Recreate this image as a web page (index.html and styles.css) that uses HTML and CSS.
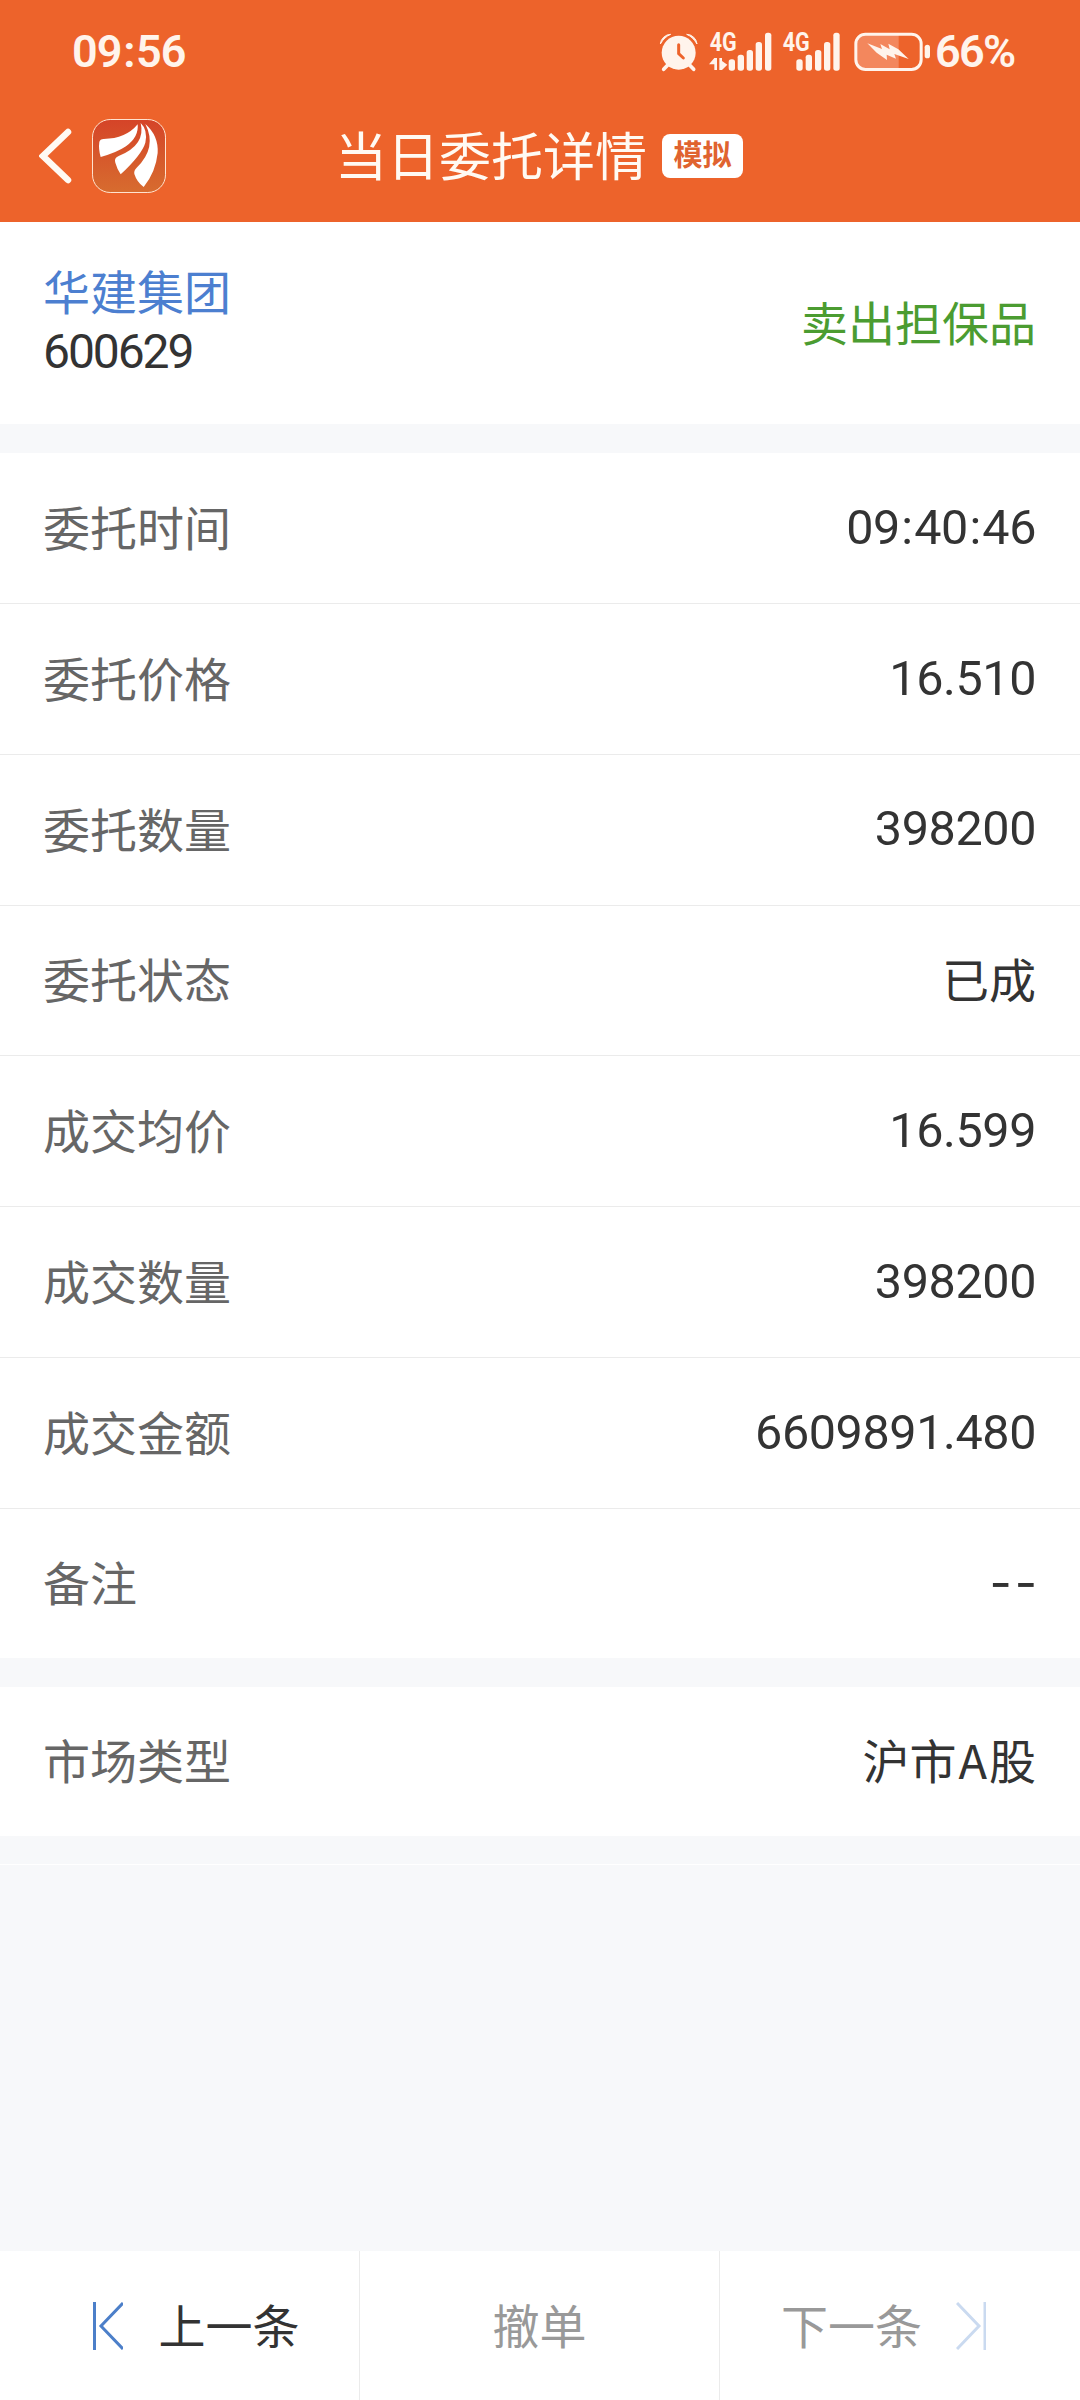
FILE: index.html
```
<!DOCTYPE html>
<html lang="zh-CN">

<head>
  <meta charset="UTF-8">
  <title>当日委托详情</title>
  <link rel="stylesheet" href="styles.css">
</head>

<body>
  <header class="header">
    <div class="status-bar">
      <span class="time">09<span class="colon">:</span>56</span>
      <svg class="status-icons" viewBox="48 30 840 180">
        <!-- alarm -->
        <circle cx="116" cy="125" r="51" />
        <path d="M61 99a32 32 0 0 1 31-29q-19 8-31 29zM171 99a32 32 0 0 0-31-29q19 8 31 29z" stroke="#fff4ec" stroke-width="3" />
        <path d="M84 161l-13 14M148 161l13 14" stroke="#fff4ec" stroke-width="11" stroke-linecap="round" />
        <path d="M116 101v27l14 13" fill="none" stroke="#ed632b" stroke-width="9" stroke-linecap="round" />
        <!-- sim 1 -->
        <text x="209" y="120" textLength="81" lengthAdjust="spacingAndGlyphs">4G</text>
        <path d="M207 160l16-19h8v36h-8v-17zM238 141h8v9l16 11-16 16h-8z" />
        <rect x="266" y="145" width="19" height="34" rx="8" />
        <rect x="293" y="131" width="19" height="48" rx="8" />
        <rect x="320" y="117" width="19" height="62" rx="8" />
        <rect x="347" y="93" width="19" height="86" rx="8" />
        <rect x="375" y="65" width="19" height="114" rx="8" />
        <!-- sim 2 -->
        <text x="428" y="120" textLength="81" lengthAdjust="spacingAndGlyphs">4G</text>
        <rect x="469" y="145" width="19" height="34" rx="8" />
        <rect x="497" y="131" width="19" height="48" rx="8" />
        <rect x="525" y="117" width="19" height="62" rx="8" />
        <rect x="552" y="93" width="19" height="86" rx="8" />
        <rect x="580" y="65" width="19" height="114" rx="8" />
        <!-- battery -->
        <path d="M776 70v104H680q-31 0-31-31v-42q0-31 31-31z" fill="#f3875d" />
        <rect x="647.500" y="69.500" width="196" height="106" rx="29" fill="none" stroke="#fff4ec" stroke-width="9" />
        <rect x="854" y="101" width="16" height="41" rx="8" />
        <path d="M682 97l44 17-5-15 28 16-4-17 30 17 31 29-43-15 5 14-28-12 1 16-31-22z" />
      </svg>
      <span class="battery">66%</span>
    </div>
    <div class="nav">
      <svg class="back" viewBox="0 0 34 56">
        <path d="M29 4L4 28l25 24" />
      </svg>
      <svg class="logo" viewBox="216 57 222 222">
        <defs>
          <linearGradient id="logo-bg" x1="0" y1="0" x2="0" y2="1">
            <stop offset="0" stop-color="#d54428" />
            <stop offset="1" stop-color="#d76c2f" />
          </linearGradient>
        </defs>
        <rect x="217.500" y="58.500" width="219" height="219" rx="53" fill="url(#logo-bg)" stroke="#ffe3cf" stroke-width="3" />
        <path d="M353 73Q357 111 318 139Q290 158 242 171Q235 147 238 126Q240 117 251 117Q318 116 353 73z" />
        <path d="M362 69Q384 90 376 128Q366 163 302 223Q292 209 286 188Q281 174 296 168Q378 135 362 69z" />
        <path d="M376 72Q416 107 413 159Q407 217 371 261Q351 247 343 222Q341 211 350 203Q412 143 376 72z" />
      </svg>
      <div class="title">
        <h1>当日委托详情</h1>
        <span class="badge">模拟</span>
      </div>
    </div>
  </header>

  <main>
    <section class="stock">
      <div>
        <a class="stock-name">华建集团</a>
        <div class="stock-code">600629</div>
      </div>
      <span class="side">卖出担保品</span>
    </section>

    <section class="list">
      <div class="row"><span class="label">委托时间</span><span class="num">09<span class="colon">:</span>40<span class="colon">:</span>46</span></div>
      <div class="row"><span class="label">委托价格</span><span class="num">16.510</span></div>
      <div class="row"><span class="label">委托数量</span><span class="num">398200</span></div>
      <div class="row"><span class="label">委托状态</span><span class="value">已成</span></div>
      <div class="row"><span class="label">成交均价</span><span class="num">16.599</span></div>
      <div class="row"><span class="label">成交数量</span><span class="num">398200</span></div>
      <div class="row"><span class="label">成交金额</span><span class="num">6609891.480</span></div>
      <div class="row last"><span class="label">备注</span><span class="num dash">--</span></div>
    </section>

    <section class="list">
      <div class="row last"><span class="label">市场类型</span><span class="value">沪市<span class="latin">A</span>股</span></div>
    </section>
    <div class="end-line"></div>
  </main>

  <footer class="footer">
    <div class="action prev">
      <svg class="step" viewBox="0 0 30 48"><path d="M1.500 0v48M30 1L8 24l22 23" /></svg>
      <span>上一条</span>
    </div>
    <div class="action disabled"><span>撤单</span></div>
    <div class="action next disabled">
      <span>下一条</span>
      <svg class="step" viewBox="0 0 30 48"><path d="M29 0v48M1 1l22 23L1 47" /></svg>
    </div>
  </footer>
</body>

</html>
```
FILE: styles.css
```
* {
  box-sizing: border-box;
}

body {
  margin: 0;
  height: 2400px;
  display: flex;
  flex-direction: column;
  background: #f7f8fa;
  color: #333;
  font-family: "Noto Sans CJK SC", sans-serif;
  font-size: 47px;
  line-height: 1;
}

.header {
  height: 222px;
  background: #ed632b;
  color: #fffaf3;
}

.status-bar {
  height: 100px;
  display: flex;
  align-items: center;
  padding: 2px 61px 0 72px;
  color: #fff4ec;
  font-family: Roboto, sans-serif;
  font-size: 45px;
  font-weight: 600;
}

.time {
  letter-spacing: -0.9px;
}

.status-icons {
  width: 280px;
  height: 60px;
  margin-left: auto;
  margin-right: -1px;
  fill: #fff4ec;
}

.status-icons text {
  font-size: 76px;
  font-weight: 700;
}

.battery {
  width: 84px;
  letter-spacing: -1.7px;
  white-space: nowrap;
}

.colon {
  margin: 0 1.5px;
}

.nav {
  height: 112px;
  display: flex;
  align-items: center;
  padding-left: 39px;
}

.back {
  width: 34px;
  height: 56px;
  fill: none;
  stroke: #fffaf3;
  stroke-width: 6.5;
  stroke-linecap: round;
}

.logo {
  width: 74px;
  height: 74px;
  margin-left: 19px;
  fill: #fff;
}

.title {
  display: flex;
  align-items: center;
  margin-left: 169px;
}

h1 {
  margin: 0;
  padding-bottom: 4px;
  font-size: 52px;
  font-weight: 400;
}

.badge {
  width: 81px;
  height: 44px;
  margin-left: 15px;
  border-radius: 8px;
  background: #fff;
  color: #e0632f;
  font-size: 29px;
  font-weight: 700;
  line-height: 39px;
  text-align: center;
}

.stock {
  height: 202px;
  display: flex;
  justify-content: space-between;
  align-items: center;
  padding: 0 44px 0 43px;
  background: #fff;
}

.stock-name {
  display: block;
  margin-top: -5px;
  color: #4c7fd0;
}

.stock-code {
  margin-top: 15px;
  font-family: Roboto, sans-serif;
  font-size: 48px;
  letter-spacing: -2.1px;
}

.side {
  padding-bottom: 6px;
  color: #4b9c31;
}

.list {
  margin-top: 29px;
  background: #fff;
}

.row {
  height: 150.857px;
  display: flex;
  justify-content: space-between;
  align-items: center;
  padding: 0 44px 0 43px;
  border-bottom: 1px solid #ebebeb;
}

.row.last {
  height: 149px;
  border-bottom: none;
}

.label,
.value {
  padding-bottom: 5px;
}

.label {
  color: #666;
}

.latin {
  margin: 0 2px;
}

.num {
  font-family: Roboto, sans-serif;
  font-size: 48.5px;
  letter-spacing: -0.4px;
}

.dash {
  font-family: Inter, sans-serif;
  letter-spacing: 3px;
  margin-right: -4px;
}

.end-line {
  height: 1px;
  margin-top: 28px;
  background: #fff;
}

.footer {
  height: 149px;
  margin-top: auto;
  display: flex;
  background: #fff;
}

.action {
  width: 360px;
  display: flex;
  justify-content: center;
  align-items: center;
  border-right: 1px solid #ebebeb;
}

.action span {
  padding-bottom: 5px;
}

.prev {
  gap: 36px;
  padding-left: 33px;
}

.next {
  gap: 34px;
  padding-right: 33px;
  border-right: none;
}

.disabled {
  color: #999;
}

.step {
  width: 30px;
  height: 48px;
  fill: none;
  stroke: #4c7fc9;
  stroke-width: 3;
}

.disabled .step {
  stroke: #cadaf0;
}
```
